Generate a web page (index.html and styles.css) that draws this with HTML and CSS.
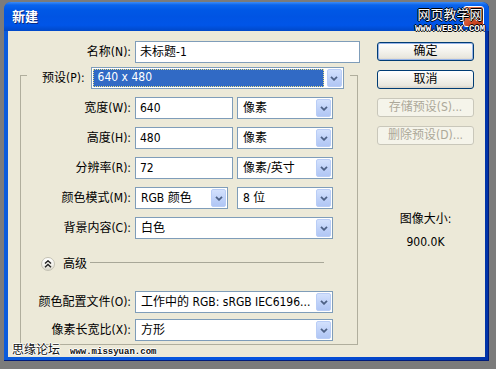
FILE: index.html
```html
<!DOCTYPE html>
<html lang="zh-cn">
<head>
  <meta charset="UTF-8">
  <title>新建</title>
  <link rel="stylesheet" href="styles.css">
</head>
<body>
  <div class="window">
    <div class="titlebar">
      <span class="title">新建</span>
      <span class="close">
        <svg width="11" height="11" viewBox="0 0 11 11"><path d="M1.5 1.5 L9.5 9.5 M9.5 1.5 L1.5 9.5" stroke="#fff" stroke-width="2.2" fill="none"/></svg>
      </span>
    </div>

    <div class="client">
      <div class="form">
        <div class="name-row">
          <label>名称(N):</label>
          <div class="field">未标题-1</div>
        </div>

        <fieldset class="group">
          <legend>
            <div class="preset-row">
              <label>预设(P):</label>
              <div class="select preset">
                <span class="val"><span class="focus">640 x 480</span></span>
                <span class="arrow"><svg width="8" height="5" viewBox="0 0 8 5"><path d="M1 0.8 L4 3.8 L7 0.8" stroke="#4d6185" stroke-width="1.8" fill="none"/></svg></span>
              </div>
            </div>
          </legend>

          <div class="fields">
            <label>宽度(W):</label>
            <div class="field">640</div>
            <div class="select">
              <span class="val">像素</span>
              <span class="arrow"><svg width="8" height="5" viewBox="0 0 8 5"><path d="M1 0.8 L4 3.8 L7 0.8" stroke="#4d6185" stroke-width="1.8" fill="none"/></svg></span>
            </div>

            <label>高度(H):</label>
            <div class="field">480</div>
            <div class="select">
              <span class="val">像素</span>
              <span class="arrow"><svg width="8" height="5" viewBox="0 0 8 5"><path d="M1 0.8 L4 3.8 L7 0.8" stroke="#4d6185" stroke-width="1.8" fill="none"/></svg></span>
            </div>

            <label>分辨率(R):</label>
            <div class="field">72</div>
            <div class="select">
              <span class="val">像素/英寸</span>
              <span class="arrow"><svg width="8" height="5" viewBox="0 0 8 5"><path d="M1 0.8 L4 3.8 L7 0.8" stroke="#4d6185" stroke-width="1.8" fill="none"/></svg></span>
            </div>

            <label>颜色模式(M):</label>
            <div class="select narrow">
              <span class="val">RGB 颜色</span>
              <span class="arrow"><svg width="8" height="5" viewBox="0 0 8 5"><path d="M1 0.8 L4 3.8 L7 0.8" stroke="#4d6185" stroke-width="1.8" fill="none"/></svg></span>
            </div>
            <div class="select">
              <span class="val">8 位</span>
              <span class="arrow"><svg width="8" height="5" viewBox="0 0 8 5"><path d="M1 0.8 L4 3.8 L7 0.8" stroke="#4d6185" stroke-width="1.8" fill="none"/></svg></span>
            </div>

            <label>背景内容(C):</label>
            <div class="select span2">
              <span class="val">白色</span>
              <span class="arrow"><svg width="8" height="5" viewBox="0 0 8 5"><path d="M1 0.8 L4 3.8 L7 0.8" stroke="#4d6185" stroke-width="1.8" fill="none"/></svg></span>
            </div>
          </div>

          <div class="advanced">
            <span class="toggle">
              <svg width="8" height="8" viewBox="0 0 8 8"><path d="M1 3.5 L4 0.8 L7 3.5 M1 7.2 L4 4.5 L7 7.2" stroke="#222" stroke-width="1.4" fill="none"/></svg>
            </span>
            <span class="adv-label">高级</span>
            <span class="rule"></span>
          </div>

          <div class="fields lower">
            <label>颜色配置文件(O):</label>
            <div class="select span2">
              <span class="val">工作中的 RGB: sRGB IEC6196...</span>
              <span class="arrow"><svg width="8" height="5" viewBox="0 0 8 5"><path d="M1 0.8 L4 3.8 L7 0.8" stroke="#4d6185" stroke-width="1.8" fill="none"/></svg></span>
            </div>

            <label>像素长宽比(X):</label>
            <div class="select span2">
              <span class="val">方形</span>
              <span class="arrow"><svg width="8" height="5" viewBox="0 0 8 5"><path d="M1 0.8 L4 3.8 L7 0.8" stroke="#4d6185" stroke-width="1.8" fill="none"/></svg></span>
            </div>
          </div>
        </fieldset>
      </div>

      <div class="side">
        <button class="btn default">确定</button>
        <button class="btn">取消</button>
        <button class="btn" disabled>存储预设(S)...</button>
        <button class="btn" disabled>删除预设(D)...</button>
        <div class="size">
          <div>图像大小:</div>
          <div>900.0K</div>
        </div>
      </div>
    </div>

    <div class="mark-top">
      <div class="cn">网页教学网</div>
      <div class="en">WWW.WEBJX.COM</div>
    </div>
    <div class="mark-bottom">
      <span class="cn">思缘论坛</span>
      <span class="en">www.missyuan.com</span>
    </div>
  </div>
</body>
</html>
```

FILE: styles.css
```css
* {
  box-sizing: border-box;
}

body {
  margin: 0;
  background-color: #7b7b7b;
  font-family: "DejaVu Sans Condensed", "DejaVu Sans", "Noto Sans CJK SC", sans-serif;
  font-size: 12px;
  line-height: 16px;
  color: #000;
}

.window {
  position: relative;
  margin: 2px 0 0 4px;
  width: 485px;
  height: 359px;
  border-radius: 7px 7px 0 0;
  background: linear-gradient(to right, #0a5bdc, #0552e0 60%, #0033a8);
  box-shadow: inset -1px -1px 0 #001b7a;
  display: flex;
  flex-direction: column;
  overflow: hidden;
}

.titlebar {
  height: 29px;
  display: flex;
  align-items: center;
  justify-content: space-between;
  padding: 0 5px 0 8px;
  background: linear-gradient(#3d8cf5 0, #0a64ec 3px, #0058e6 8px, #0054e3 50%, #0055e8 80%, #0048c8 100%);
}

.title {
  color: #fff;
  font-weight: bold;
  font-size: 13px;
  text-shadow: 1px 1px #0b2a80;
}

.close {
  width: 21px;
  height: 21px;
  border: 1px solid #fff;
  border-radius: 3px;
  background: linear-gradient(135deg, #e8886a, #cf4a26 60%, #b33415);
  display: flex;
  align-items: center;
  justify-content: center;
}

.client {
  flex: 1;
  margin: 0 4px 4px;
  background-color: #ece9d8;
  display: flex;
  padding: 10px 0 0 12px;
}

.form {
  width: 340px;
}

label {
  text-align: right;
  white-space: nowrap;
}

.name-row {
  display: grid;
  grid-template-columns: 111px 225px;
  column-gap: 4px;
  align-items: center;
}

.field {
  height: 22px;
  background: #fff;
  border: 1px solid #7f9db9;
  padding: 0 4px;
  display: flex;
  align-items: center;
  white-space: nowrap;
}

.select {
  height: 22px;
  background: #fff;
  border: 1px solid #7f9db9;
  display: flex;
  align-items: center;
  white-space: nowrap;
}

.select .val {
  flex: 1;
  padding-left: 5px;
  overflow: hidden;
}

.select .arrow {
  width: 15px;
  height: 18px;
  margin-right: 1px;
  border: 1px solid #b9cdf6;
  border-radius: 2px;
  background: linear-gradient(#d3e1fd, #bdd0f8 60%, #b0c6f5);
  display: flex;
  align-items: center;
  justify-content: center;
}

.select.narrow {
  width: 93px;
}

.select.span2 {
  grid-column: span 2;
}

.group {
  width: 338px;
  margin: -2px 0 0;
  padding: 0 0 3px;
  border: 1px solid #b0ae9d;
}

.group legend {
  margin-left: 6px;
  padding: 6px 6px 0 15px;
}

.preset-row {
  display: flex;
  align-items: center;
  gap: 6px;
}

.preset {
  width: 253px;
}

.preset .val {
  padding: 0;
  margin: 0 3px 0 1px;
  height: 18px;
}

.preset .focus {
  display: block;
  height: 18px;
  background: #316ac5;
  color: #fff;
  padding-left: 5px;
  line-height: 17px;
  outline: 1px dotted #e8e08a;
  outline-offset: -1px;
}

.fields {
  display: grid;
  grid-template-columns: 110px 98px 96px;
  column-gap: 4px;
  row-gap: 8px;
  margin-top: 8px;
  align-items: center;
}

.fields.lower {
  row-gap: 6px;
  margin-top: 20px;
}

.advanced {
  display: flex;
  align-items: center;
  height: 14px;
  margin-top: 18px;
  padding-left: 20px;
}

.toggle {
  width: 14px;
  height: 14px;
  border-radius: 50%;
  border: 1px solid #c4c2b4;
  background: linear-gradient(#fff, #f0efe8 60%, #d8d5c8);
  display: flex;
  align-items: center;
  justify-content: center;
}

.adv-label {
  margin-left: 8px;
}

.rule {
  flex: 1;
  height: 1px;
  background: #a8a798;
  margin: 0 33px 3px 3px;
}

.side {
  width: 97px;
  margin-left: 17px;
  padding-top: 1px;
  display: flex;
  flex-direction: column;
  gap: 9px;
}

.btn {
  height: 19px;
  padding: 0;
  font: inherit;
  line-height: 15px;
  color: #000;
  border: 1px solid #003c74;
  border-radius: 3px;
  background: linear-gradient(#ffffff, #f3f2ec 50%, #e9e7de 85%, #d6d0c5);
}

.btn.default {
  box-shadow: inset 0 0 0 1px #98b4e8;
}

.btn:disabled {
  color: #aca899;
  border-color: #c9c7ba;
  background: #f5f4ea;
}

.size {
  margin-top: 57px;
  text-align: center;
  display: flex;
  flex-direction: column;
  gap: 7px;
}

.mark-top {
  position: absolute;
  left: 409px;
  top: 5px;
  width: 74px;
  text-align: center;
  color: #fff;
}

.mark-top .cn {
  font-size: 13px;
  line-height: 16px;
  text-shadow: -1px 0 #000, 1px 0 #000, 0 -1px #000, 0 1px #000;
}

.mark-top .en {
  font-family: "Liberation Mono", monospace;
  font-weight: bold;
  font-size: 9px;
  line-height: 8px;
  margin-top: 2px;
  text-shadow: -1px 0 #000, 1px 0 #000, 0 -1px #000, 0 1px #000;
}

.mark-bottom {
  position: absolute;
  left: 8px;
  bottom: 1px;
  display: flex;
  align-items: baseline;
  gap: 10px;
  color: #111;
}

.mark-bottom .cn {
  font-size: 12px;
  line-height: 14px;
  text-shadow: -1px 0 #fff, 1px 0 #fff, 0 -1px #fff, 0 1px #fff;
}

.mark-bottom .en {
  font-family: "Liberation Mono", monospace;
  font-weight: bold;
  font-size: 9px;
  text-shadow: -1px 0 #fff, 1px 0 #fff, 0 -1px #fff, 0 1px #fff;
}
```
